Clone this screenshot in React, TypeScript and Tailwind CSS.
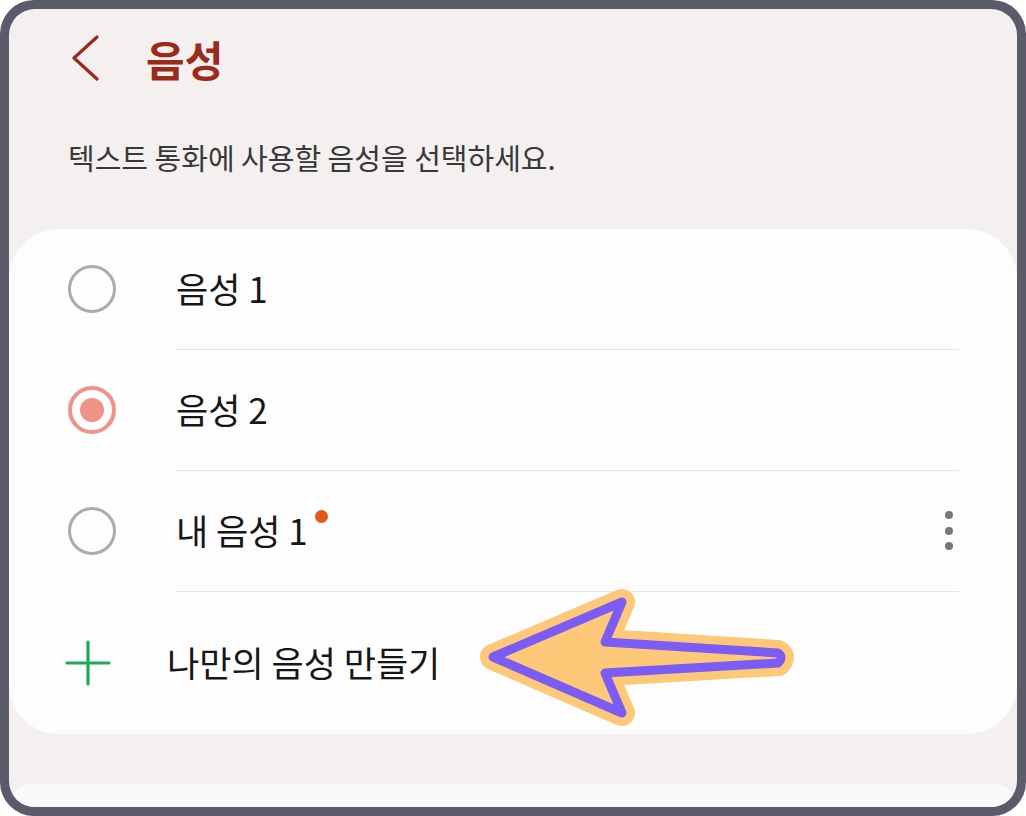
const font = { fontFamily: '"Noto Sans CJK KR", "Noto Sans", sans-serif' };

function Radio({ checked }: { checked?: boolean }) {
  if (checked) {
    return (
      <span className="flex h-[48px] w-[48px] shrink-0 items-center justify-center rounded-full border-[4px] border-[#ef9288]">
        <span className="h-[24px] w-[24px] rounded-full bg-[#ef9288]" />
      </span>
    );
  }
  return <span className="h-[48px] w-[48px] shrink-0 rounded-full border-[3px] border-[#ababab]" />;
}

function VoiceRow({ label, checked, dot, more }: { label: string; checked?: boolean; dot?: boolean; more?: boolean }) {
  return (
    <div className="flex h-[121px] items-center pl-[59px]">
      <Radio checked={checked} />
      <div className="ml-[60px] mr-[58px] flex h-full flex-1 items-center justify-between border-b border-[#e6e4e4]">
        <span className="relative text-[35px] text-[#161616]">
          {label}
          {dot && <span className="absolute -right-[20px] top-[6px] h-[13px] w-[13px] rounded-full bg-[#e4561a]" />}
        </span>
        {more && (
          <span className="mr-[6px] flex flex-col gap-[7.5px]">
            <span className="h-[8px] w-[8px] rounded-full bg-[#777]" />
            <span className="h-[8px] w-[8px] rounded-full bg-[#777]" />
            <span className="h-[8px] w-[8px] rounded-full bg-[#777]" />
          </span>
        )}
      </div>
    </div>
  );
}

function Arrow() {
  const d = 'M493 657 L622 602 L605 642 L778 653 Q784 657 778 663 L605 673 L622 713 Z';
  return (
    <svg className="pointer-events-none absolute left-0 top-0" width="1026" height="816" viewBox="0 0 1026 816">
      <path d={d} fill="#fdc878" stroke="#fdc878" strokeWidth="26" strokeLinejoin="round" />
      <path d={d} fill="#fdc878" stroke="#7b5cf5" strokeWidth="9" strokeLinejoin="round" />
    </svg>
  );
}

export default function App() {
  return (
    <div className="relative h-[816px] w-[1026px] bg-white" style={font}>
      <div className="h-full w-full rounded-[34px] bg-[#5c5b6a] p-[9px]">
        <div className="flex h-full w-full flex-col overflow-hidden rounded-[26px] bg-[#f4f0ef]">
          <div className="flex h-[98px] items-center pl-[63px]">
            <svg width="28" height="46" viewBox="0 0 28 46" className="shrink-0">
              <path d="M25 2 L2 23 L25 44" fill="none" stroke="#9b2a1a" strokeWidth="3.2" strokeLinecap="round" strokeLinejoin="round" />
            </svg>
            <span className="ml-[46px] text-[42px] font-bold text-[#9b2a1a]">음성</span>
          </div>
          <p className="mt-[29px] pl-[59px] text-[29px] text-[#383838]">텍스트 통화에 사용할 음성을 선택하세요.</p>
          <div className="mt-[49px] rounded-[50px] bg-[#fdfdfd]">
            <VoiceRow label="음성 1" />
            <VoiceRow label="음성 2" checked />
            <VoiceRow label="내 음성 1" dot more />
            <div className="flex h-[142px] items-center pl-[56px]">
              <svg width="46" height="46" viewBox="0 0 46 46" className="shrink-0">
                <path d="M23 2 V44 M2 23 H44" stroke="#1fa95a" strokeWidth="3.2" strokeLinecap="round" />
              </svg>
              <span className="ml-[56px] text-[35px] text-[#161616]">나만의 음성 만들기</span>
            </div>
          </div>
          <div className="mt-[50px] flex-1 rounded-t-[44px] bg-[#fbfafa]" />
        </div>
      </div>
      <Arrow />
    </div>
  );
}
